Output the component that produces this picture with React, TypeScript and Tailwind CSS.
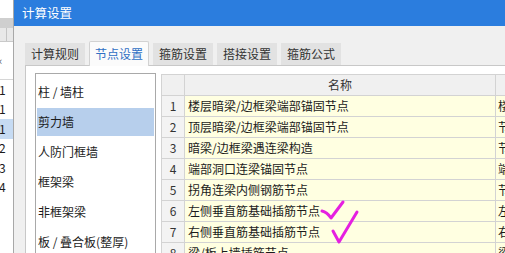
const tabs = ['计算规则', '节点设置', '箍筋设置', '搭接设置', '箍筋公式']

const categories = ['柱 / 墙柱', '剪力墙', '人防门框墙', '框架梁', '非框架梁', '板 / 叠合板(整厚)']

const rows = [
  { name: '楼层暗梁/边框梁端部锚固节点', extra: '楼' },
  { name: '顶层暗梁/边框梁端部锚固节点', extra: '节' },
  { name: '暗梁/边框梁遇连梁构造', extra: '节' },
  { name: '端部洞口连梁锚固节点', extra: '端' },
  { name: '拐角连梁内侧钢筋节点', extra: '节' },
  { name: '左侧垂直筋基础插筋节点', extra: '左' },
  { name: '右侧垂直筋基础插筋节点', extra: '右' },
  { name: '梁/板上墙插筋节点', extra: '梁' },
]

const stripRows = ['1', '1', '1', '2', '3', '4']

function App() {
  return (
    <div
      className="relative flex h-[253px] w-[505px] overflow-hidden bg-white text-[12px] text-[#1b1b1b]"
      style={{ fontFamily: '"Noto Sans CJK SC", "Noto Sans", sans-serif' }}
    >
      {/* window behind the dialog */}
      <div className="flex w-[13px] shrink-0 flex-col">
        <div className="h-[18px] bg-white" />
        <div className="h-[10px] bg-[#cfcfcf]" />
        <div className="flex h-[14px] border-b border-[#c9c9c9] bg-[#e8e8e8]">
          <div className="w-[7px] border-r border-[#c4c4c4]" />
        </div>
        <div className="flex h-[38px] items-center border-b border-[#d6d6d6] text-[11px] text-[#555]">
          <span className="-ml-[1px]">‹</span>
        </div>
        {stripRows.map((n, i) => (
          <div
            key={i}
            className={`flex h-[19.5px] items-center leading-none ${i === 2 ? 'bg-[#c6dbf3]' : ''}`}
          >
            <span className="-ml-[1px]">{n}</span>
          </div>
        ))}
      </div>

      <div className="flex min-w-0 flex-1 flex-col border-l border-[#a8a8a8]">
        <div className="flex h-[26px] shrink-0 items-center bg-[#2b7dde] pl-[8px] text-[12.5px] text-white">
          计算设置
        </div>

        <div className="flex flex-1 flex-col bg-[#f0f0f0] pl-[11px] pt-[15px]">
          <div className="relative z-10 flex h-[25px] items-end gap-[4px]">
            {tabs.map((t, i) =>
              i === 1 ? (
                <div
                  key={t}
                  className="flex h-[25px] w-[60px] items-center justify-center rounded-t-[2px] border border-b-0 border-[#d2d2d2] bg-[#fbfbfb] text-[#2f6fc4]"
                >
                  {t}
                </div>
              ) : (
                <div
                  key={t}
                  className="mb-[1px] flex h-[22px] w-[60px] items-center justify-center bg-[#e2e2e2] text-[#333]"
                >
                  {t}
                </div>
              ),
            )}
          </div>

          <div className="-mt-[1px] flex flex-1 gap-[5px] border-l border-t border-[#c8c8c8] bg-white pl-[9px] pt-[7px]">
            <div className="w-[121px] shrink-0 border border-b-0 border-[#a9a9a9] px-[1px] pt-[3px]">
              {categories.map((c, i) => (
                <div key={c} className="flex h-[30px] items-center">
                  <div
                    className={`flex h-[28px] w-full items-center pl-[1px] ${i === 1 ? 'bg-[#b7cfec]' : ''}`}
                  >
                    {c}
                  </div>
                </div>
              ))}
            </div>

            <div className="mt-[1px] grid flex-1 grid-cols-[23px_311px_60px] content-start border-l border-t border-[#d3d3d3]">
              <div className="h-[21px] border-b border-r border-[#d3d3d3] bg-[#f0f0f0]" />
              <div className="flex h-[21px] items-center justify-center border-b border-r border-[#d3d3d3] bg-[#f0f0f0] text-[#333]">
                名称
              </div>
              <div className="h-[21px] border-b border-r border-[#d3d3d3] bg-[#f0f0f0]" />
              {rows.map((r, i) => (
                <div key={r.name} className="contents">
                  <div className="flex h-[21px] items-center justify-center border-b border-r border-[#d3d3d3] bg-[#f3f3f3] text-[#333]">
                    {i + 1}
                  </div>
                  <div className="flex h-[21px] items-center border-b border-r border-[#d3d3d3] bg-[#ffffe1] pl-[3px]">
                    {r.name}
                  </div>
                  <div className="flex h-[21px] items-center border-b border-r border-[#d3d3d3] bg-[#ffffe1] pl-[2px]">
                    {r.extra}
                  </div>
                </div>
              ))}
            </div>
          </div>
        </div>
      </div>

      {/* hand-drawn check marks */}
      <svg
        className="pointer-events-none absolute left-0 top-0"
        width="505"
        height="253"
        viewBox="0 0 505 253"
        fill="none"
      >
        <path
          d="M322 211 Q327 212 331 218 L337 210 L343 202"
          stroke="#e51fe0"
          strokeWidth="3"
          strokeLinecap="round"
          strokeLinejoin="round"
        />
        <path
          d="M333 231 L339 242 L345 232 L351 222 L357 212"
          stroke="#e51fe0"
          strokeWidth="3"
          strokeLinecap="round"
          strokeLinejoin="round"
        />
      </svg>
    </div>
  )
}

export default App
